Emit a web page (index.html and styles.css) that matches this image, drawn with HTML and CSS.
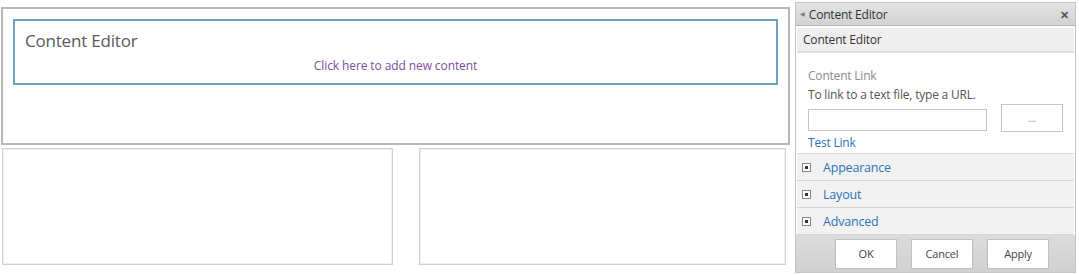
FILE: index.html
```html
<!DOCTYPE html>
<html>
<head>
<meta charset="utf-8">
<link rel="stylesheet" href="styles.css">
</head>
<body>
<div class="page">
  <div class="canvas">
    <div class="zone-top">
      <div class="webpart">
        <div class="wp-title">Content Editor</div>
        <div class="wp-link">Click here to add new content</div>
      </div>
    </div>
    <div class="zone-row">
      <div class="zone-left"></div>
      <div class="zone-right"></div>
    </div>
  </div>
  <aside class="toolpane">
    <div class="tp-title">
      <span class="tp-arrow">&#9664;</span>
      <span class="tp-name">Content Editor</span>
      <span class="tp-close">&#10005;</span>
    </div>
    <div class="tp-section">Content Editor</div>
    <div class="tp-body">
      <div class="tp-label">Content Link</div>
      <div class="tp-hint">To link to a text file, type a URL.</div>
      <div class="tp-inputrow">
        <div class="tp-input"></div>
        <div class="tp-browse">...</div>
      </div>
      <div class="tp-test">Test Link</div>
    </div>
    <div class="tp-group"><span class="tp-plus"></span><span class="tp-glabel">Appearance</span></div>
    <div class="tp-group"><span class="tp-plus"></span><span class="tp-glabel">Layout</span></div>
    <div class="tp-group"><span class="tp-plus"></span><span class="tp-glabel">Advanced</span></div>
    <div class="tp-footer">
      <div class="tp-btn">OK</div>
      <div class="tp-btn">Cancel</div>
      <div class="tp-btn">Apply</div>
    </div>
  </aside>
</div>
</body>
</html>
```

FILE: styles.css
```css
html, body {
  margin: 0;
  padding: 0;
  background: #ffffff;
}
body {
  font-family: "Open Sans", "Noto Sans", sans-serif;
  color: #444;
  width: 1079px;
  height: 275px;
  overflow: hidden;
}
.page {
  display: flex;
  align-items: flex-start;
}
.canvas {
  width: 789px;
  padding: 7px 0 0 1px;
  display: flex;
  flex-direction: column;
  gap: 3px;
}
.zone-top {
  height: 124px;
  border: 2px solid #b8b8b8;
  padding: 10px 10px 0 10px;
  box-sizing: content-box;
}
.webpart {
  height: 62px;
  border: 2px solid #6ea3c4;
  padding: 0 0 0 10px;
}
.wp-title {
  font-size: 17px;
  color: #5a5a5a;
  margin-top: 8px;
  letter-spacing: -0.2px;
}
.wp-link {
  font-size: 12px;
  color: #7b4d9e;
  text-align: center;
  margin-top: 5px;
  padding-right: 10px;
  letter-spacing: -0.1px;
}
.zone-row {
  display: flex;
  gap: 26px;
  padding-left: 1px;
}
.zone-left {
  width: 389px;
  height: 115px;
  border: 1px solid #d2d2d2;
  box-shadow: inset 0 0 0 1px #f0f0f0;
}
.zone-right {
  width: 365px;
  height: 115px;
  border: 1px solid #d2d2d2;
  box-shadow: inset 0 0 0 1px #f0f0f0;
}
.toolpane {
  margin-left: 5px;
  margin-top: 2px;
  width: 279px;
  height: 269px;
  border: 1px solid #c4c4c4;
  display: flex;
  flex-direction: column;
  font-size: 12px;
  letter-spacing: -0.2px;
}
.tp-title {
  height: 22px;
  display: flex;
  align-items: center;
  background: linear-gradient(#e4e4e4, #d2d2d2);
  border-bottom: 1px solid #b8b8b8;
  padding: 0 6px 0 4px;
  color: #333;
}
.tp-arrow {
  font-size: 6px;
  color: #777;
  margin-right: 4px;
}
.tp-name {
  flex: 1;
}
.tp-close {
  font-size: 11px;
  color: #555;
  font-weight: bold;
}
.tp-section {
  margin: 2px 1px 0 1px;
  height: 23px;
  line-height: 23px;
  padding-left: 6px;
  background: #efefef;
  border-bottom: 2px solid #dcdcdc;
  color: #333;
}
.tp-body {
  padding: 15px 0 0 11px;
  display: flex;
  flex-direction: column;
  height: 85px;
  border-bottom: 1px solid #d8d8d8;
  margin: 0 1px;
}
.tp-label {
  color: #8a8a8a;
  line-height: 16px;
}
.tp-hint {
  color: #555;
  line-height: 16px;
  margin-top: 3px;
}
.tp-inputrow {
  display: flex;
  align-items: center;
  gap: 14px;
  margin-top: 1px;
}
.tp-input {
  width: 177px;
  height: 20px;
  border: 1px solid #c4c4c4;
  margin-top: 4px;
}
.tp-browse {
  width: 60px;
  height: 26px;
  border: 1px solid #c4c4c4;
  text-align: center;
  line-height: 26px;
  font-size: 10px;
  color: #888;
}
.tp-test {
  color: #2e73b8;
  margin-top: 3px;
  line-height: 16px;
}
.tp-group {
  height: 26px;
  display: flex;
  align-items: center;
  background: #f2f2f2;
  border-bottom: 1px solid #d6d6d6;
  margin: 0 1px;
  padding-left: 5px;
}
.tp-plus {
  width: 7px;
  height: 7px;
  border: 1px solid #888;
  background: #fff;
  position: relative;
  margin-right: 12px;
}
.tp-plus::before {
  content: "";
  position: absolute;
  left: 2px;
  top: 2px;
  width: 3px;
  height: 3px;
  background: #333;
}
.tp-glabel {
  color: #2e73b8;
  font-size: 12.5px;
}
.tp-footer {
  flex: 1;
  display: flex;
  align-items: center;
  justify-content: flex-end;
  gap: 14px;
  padding-right: 26px;
  background: linear-gradient(#dcdcdc, #d0d0d0);
}
.tp-btn {
  width: 60px;
  height: 28px;
  line-height: 28px;
  text-align: center;
  background: #fff;
  border: 1px solid #c0c0c0;
  font-size: 11px;
  color: #444;
}
```
